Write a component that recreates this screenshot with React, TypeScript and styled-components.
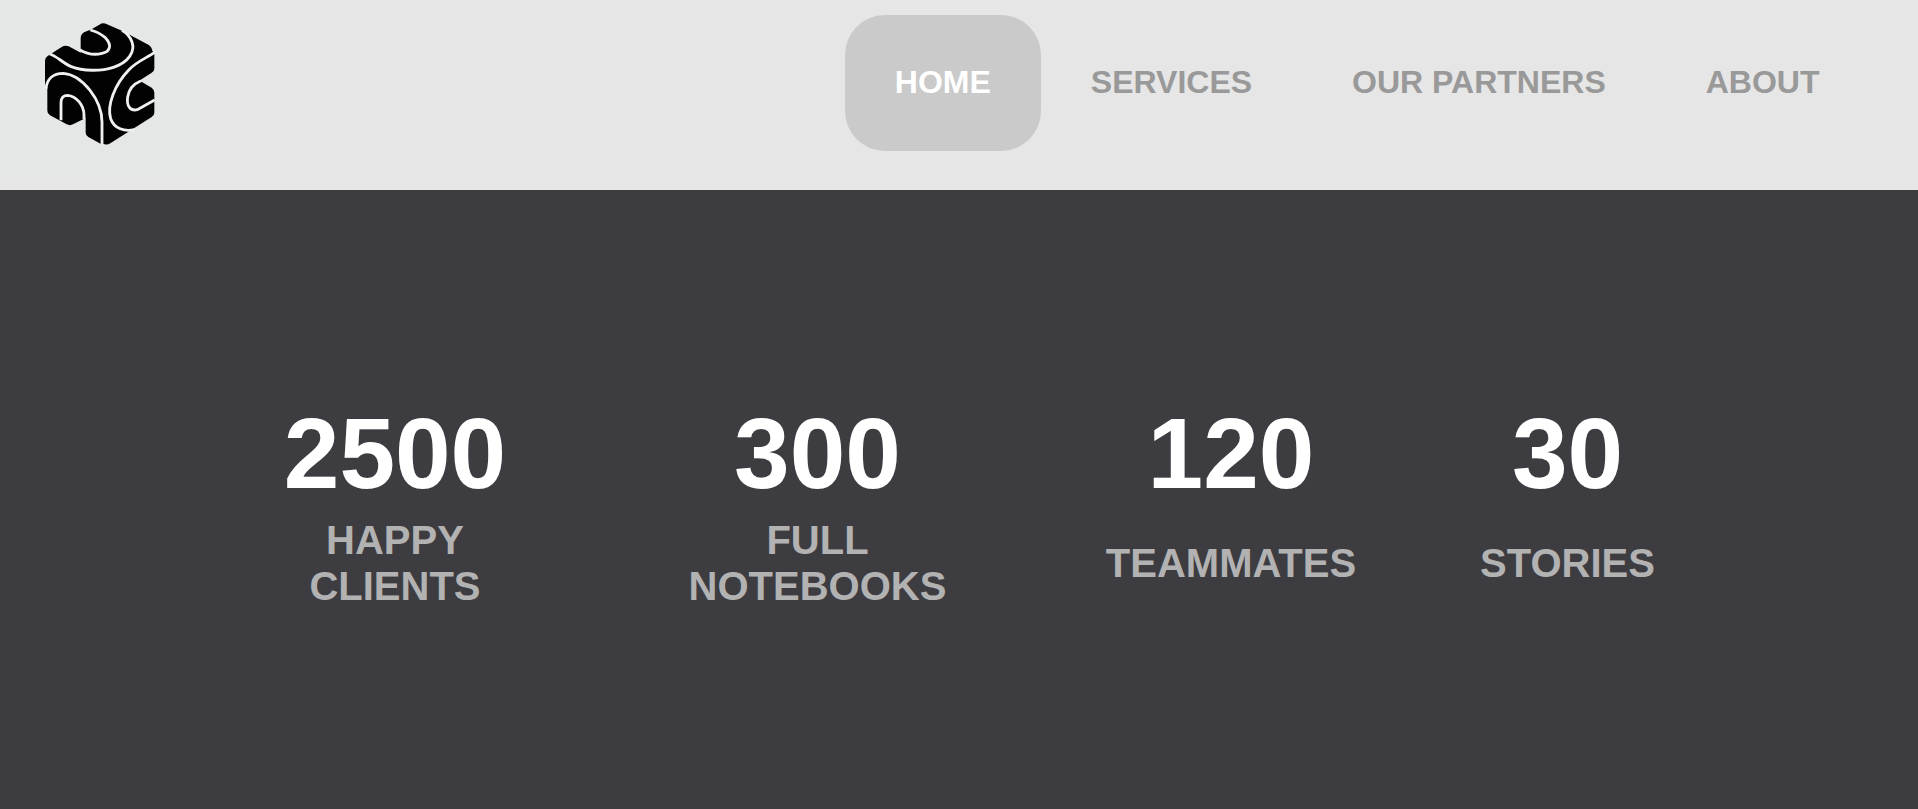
import React from 'react';
import styled, { createGlobalStyle } from 'styled-components';

const GlobalStyle = createGlobalStyle`
  body {
    margin: 0;
    background: #3d3c41;
    font-family: Arial, "Liberation Sans", sans-serif;
    font-weight: bold;
  }
`;

const Header = styled.header`
  display: flex;
  justify-content: space-between;
  align-items: flex-start;
  height: 190px;
  box-sizing: border-box;
  padding-right: 48px;
  background: #e6e6e6;
`;

const Logo = styled.svg`
  display: block;
  width: 198px;
  height: 181px;
  background: #e4e7e6;
`;

const Nav = styled.nav`
  display: flex;
  padding-top: 15px;
`;

const NavLink = styled.a<{ $active?: boolean }>`
  padding: 49px 50.5px 51px 49.5px;
  border-radius: 40px;
  font-size: 32px;
  line-height: 36px;
  white-space: nowrap;
  text-decoration: none;
  color: ${(p) => (p.$active ? '#ffffff' : '#999999')};
  background: ${(p) => (p.$active ? '#cacaca' : 'transparent')};
`;

const Stats = styled.main`
  display: grid;
  grid-template-columns: 392px 453px 374px 299px;
  height: 619px;
  box-sizing: border-box;
  padding: 206px 200px 0 199px;
`;

const Stat = styled.section`
  display: flex;
  flex-direction: column;
  padding: 0 60px;
  text-align: center;
`;

const Value = styled.div`
  font-size: 100px;
  line-height: 115px;
  color: #ffffff;
`;

const Label = styled.div`
  display: flex;
  align-items: center;
  justify-content: center;
  height: 92px;
  margin-top: 6px;
  font-size: 40px;
  line-height: 46px;
  color: #b2b2b2;
`;

const links = ['HOME', 'SERVICES', 'OUR PARTNERS', 'ABOUT'];

const stats = [
  { value: '2500', label: 'HAPPY CLIENTS' },
  { value: '300', label: 'FULL NOTEBOOKS' },
  { value: '120', label: 'TEAMMATES' },
  { value: '30', label: 'STORIES' },
];

function CubeLogo() {
  return (
    <Logo viewBox="0 0 594 543" aria-label="Logo">
      <path
        fill="#020202"
        d="M272 89L298 74Q309 66 321 73L369 94L445 134Q456 141 457 153L463 159V206Q463 214 454 219L415 244L427 247L455 263Q463 269 463 278V338Q463 346 455 351L331 430Q321 436 312 432L303 432L265 411Q257 406 257 398V354L219 373Q210 378 200 373L150 346Q142 341 142 332V262L135 265V182Q135 173 143 168L185 141Q195 134 206 139L242 158V115Q242 103 252 97L262 93Z"
      />
      <g fill="none" stroke="#eff1f0" strokeWidth="8.5">
        <path d="M149 162C170 168 187 188 214 200C248 214 305 214 340 202C386 187 406 155 396 126C390 110 380 99 366 91" />
        <path d="M271 90C287 94 304 103 316 113C338 136 329 156 306 160C280 167 257 160 239 149" />
        <path d="M138 266C141 237 160 220 189 220C248 224 306 302 306 366V434" />
        <path d="M183 361V308C183 293 190 286 203 286C228 288 252 315 252 345V357" />
        <path d="M464 157C442 173 412 183 387 209C344 253 320 316 332 356C343 387 374 395 402 389" />
        <path d="M422 243C400 252 386 270 383 291C379 318 391 334 412 329L464 300" />
      </g>
    </Logo>
  );
}

export default function App() {
  return (
    <>
      <GlobalStyle />
      <Header>
        <CubeLogo />
        <Nav>
          {links.map((text, i) => (
            <NavLink key={text} $active={i === 0}>
              {text}
            </NavLink>
          ))}
        </Nav>
      </Header>
      <Stats>
        {stats.map((s) => (
          <Stat key={s.value}>
            <Value>{s.value}</Value>
            <Label>{s.label}</Label>
          </Stat>
        ))}
      </Stats>
    </>
  );
}
